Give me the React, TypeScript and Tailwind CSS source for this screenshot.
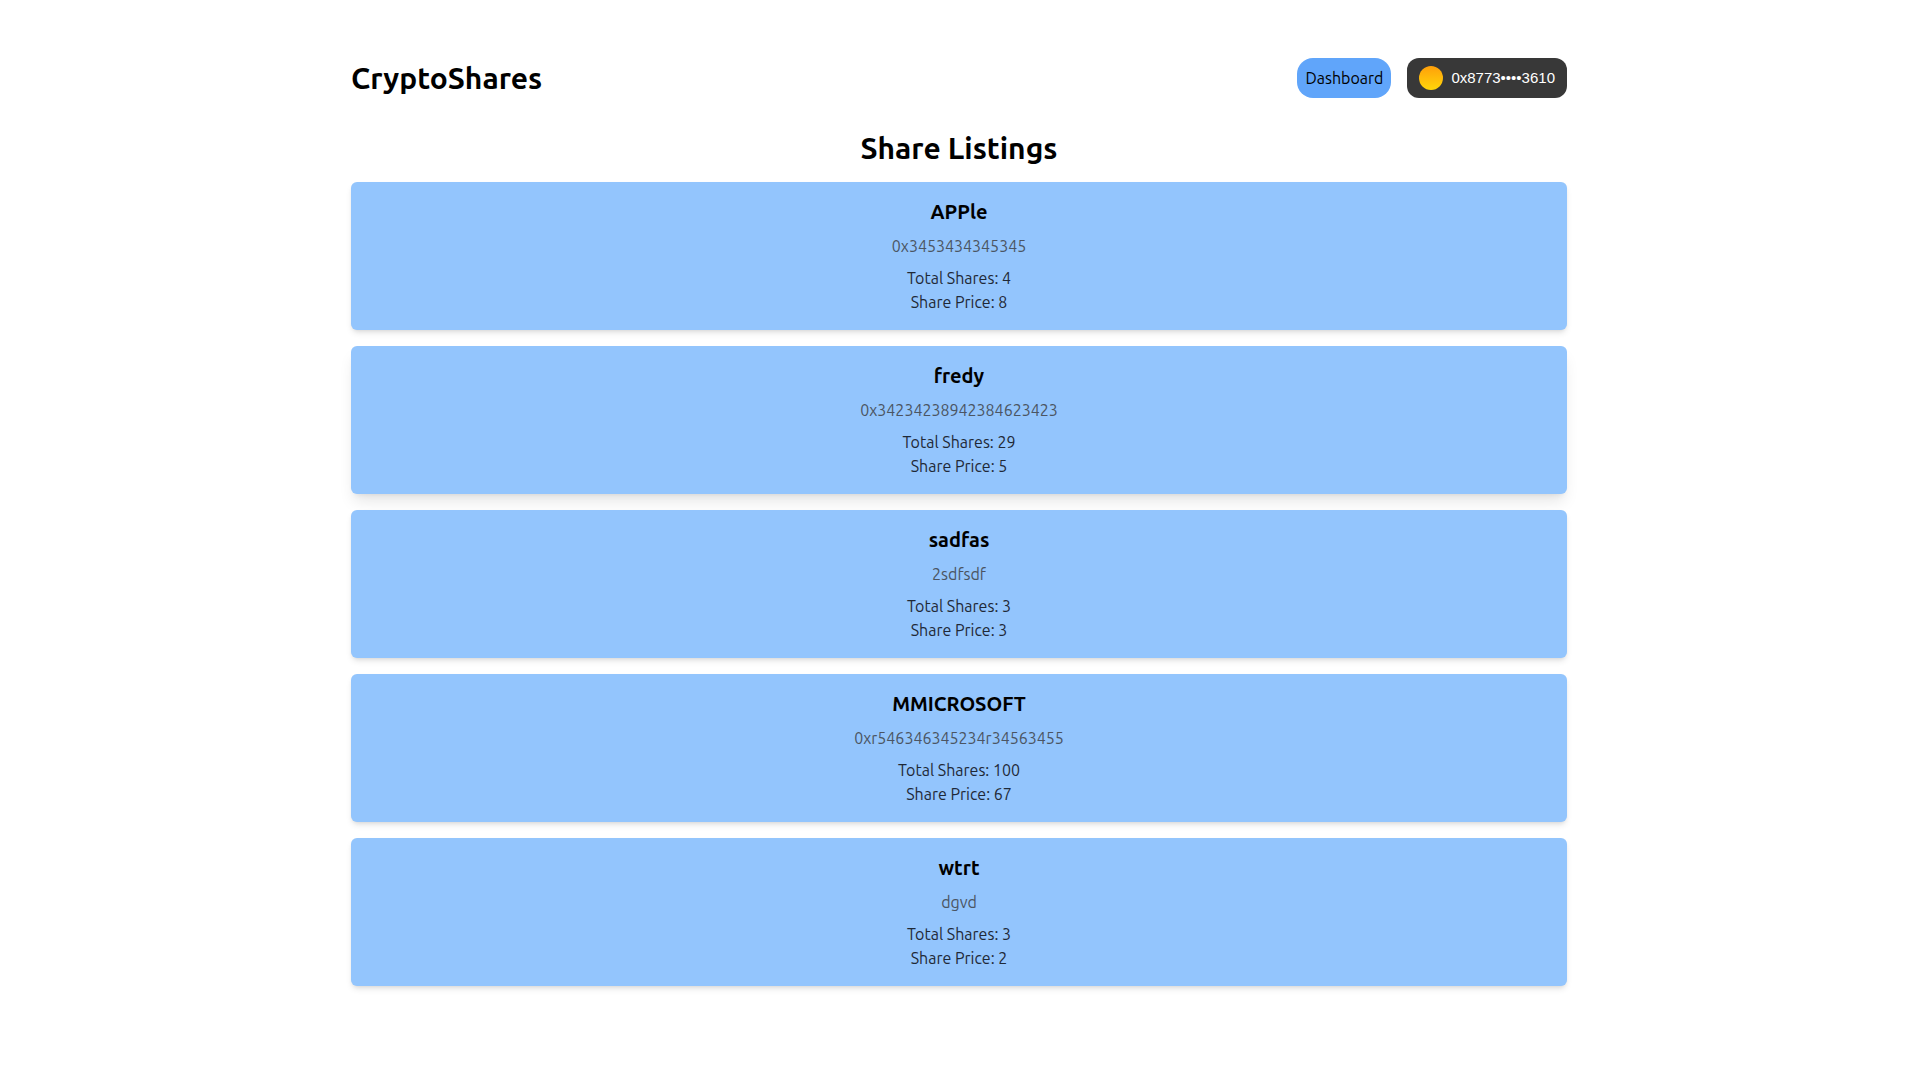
const listings = [
  { name: "APPle", address: "0x3453434345345", totalShares: 4, sharePrice: 8 },
  { name: "fredy", address: "0x34234238942384623423", totalShares: 29, sharePrice: 5 },
  { name: "sadfas", address: "2sdfsdf", totalShares: 3, sharePrice: 3 },
  { name: "MMICROSOFT", address: "0xr546346345234r34563455", totalShares: 100, sharePrice: 67 },
  { name: "wtrt", address: "dgvd", totalShares: 3, sharePrice: 2 },
];

const Navbar = () => {
  return (
    <nav className="flex items-center justify-between py-4">
      <h1 className="text-3xl font-semibold">CryptoShares</h1>
      <div className="flex items-center gap-4">
        <a href="#dashboard" className="rounded-2xl bg-[#60a5fa] p-2">
          Dashboard
        </a>
        <button
          type="button"
          className="flex h-10 items-center gap-2 rounded-xl bg-[#383838] px-3 font-['Liberation_Sans',sans-serif] text-[15px] text-white"
        >
          <span className="size-6 rounded-full bg-linear-to-b from-[#ff9f0a] to-[#ffd60a]" />
          0x8773••••3610
        </button>
      </div>
    </nav>
  );
};

export default function App() {
  return (
    <div className="mx-auto max-w-7xl px-8 pt-[42px] pb-10 font-['Ubuntu','Noto_Sans',sans-serif] text-black">
      <Navbar />
      <main className="py-4 text-center">
        <h2 className="mb-4 text-3xl font-semibold">Share Listings</h2>
        <ul className="flex flex-col gap-4">
          {listings.map((share) => (
            <li
              key={share.name}
              className={`rounded-md bg-[#93c5fd] p-4 transition-shadow hover:shadow-lg ${
                share.name === "fredy" ? "shadow-lg" : "shadow-md"
              }`}
            >
              <h3 className="mb-2 text-xl font-semibold">{share.name}</h3>
              <p className="mb-2 text-[#4b5563]">{share.address}</p>
              <p className="text-[#1f2937]">Total Shares: {share.totalShares}</p>
              <p className="text-[#1f2937]">Share Price: {share.sharePrice}</p>
            </li>
          ))}
        </ul>
      </main>
    </div>
  );
}
